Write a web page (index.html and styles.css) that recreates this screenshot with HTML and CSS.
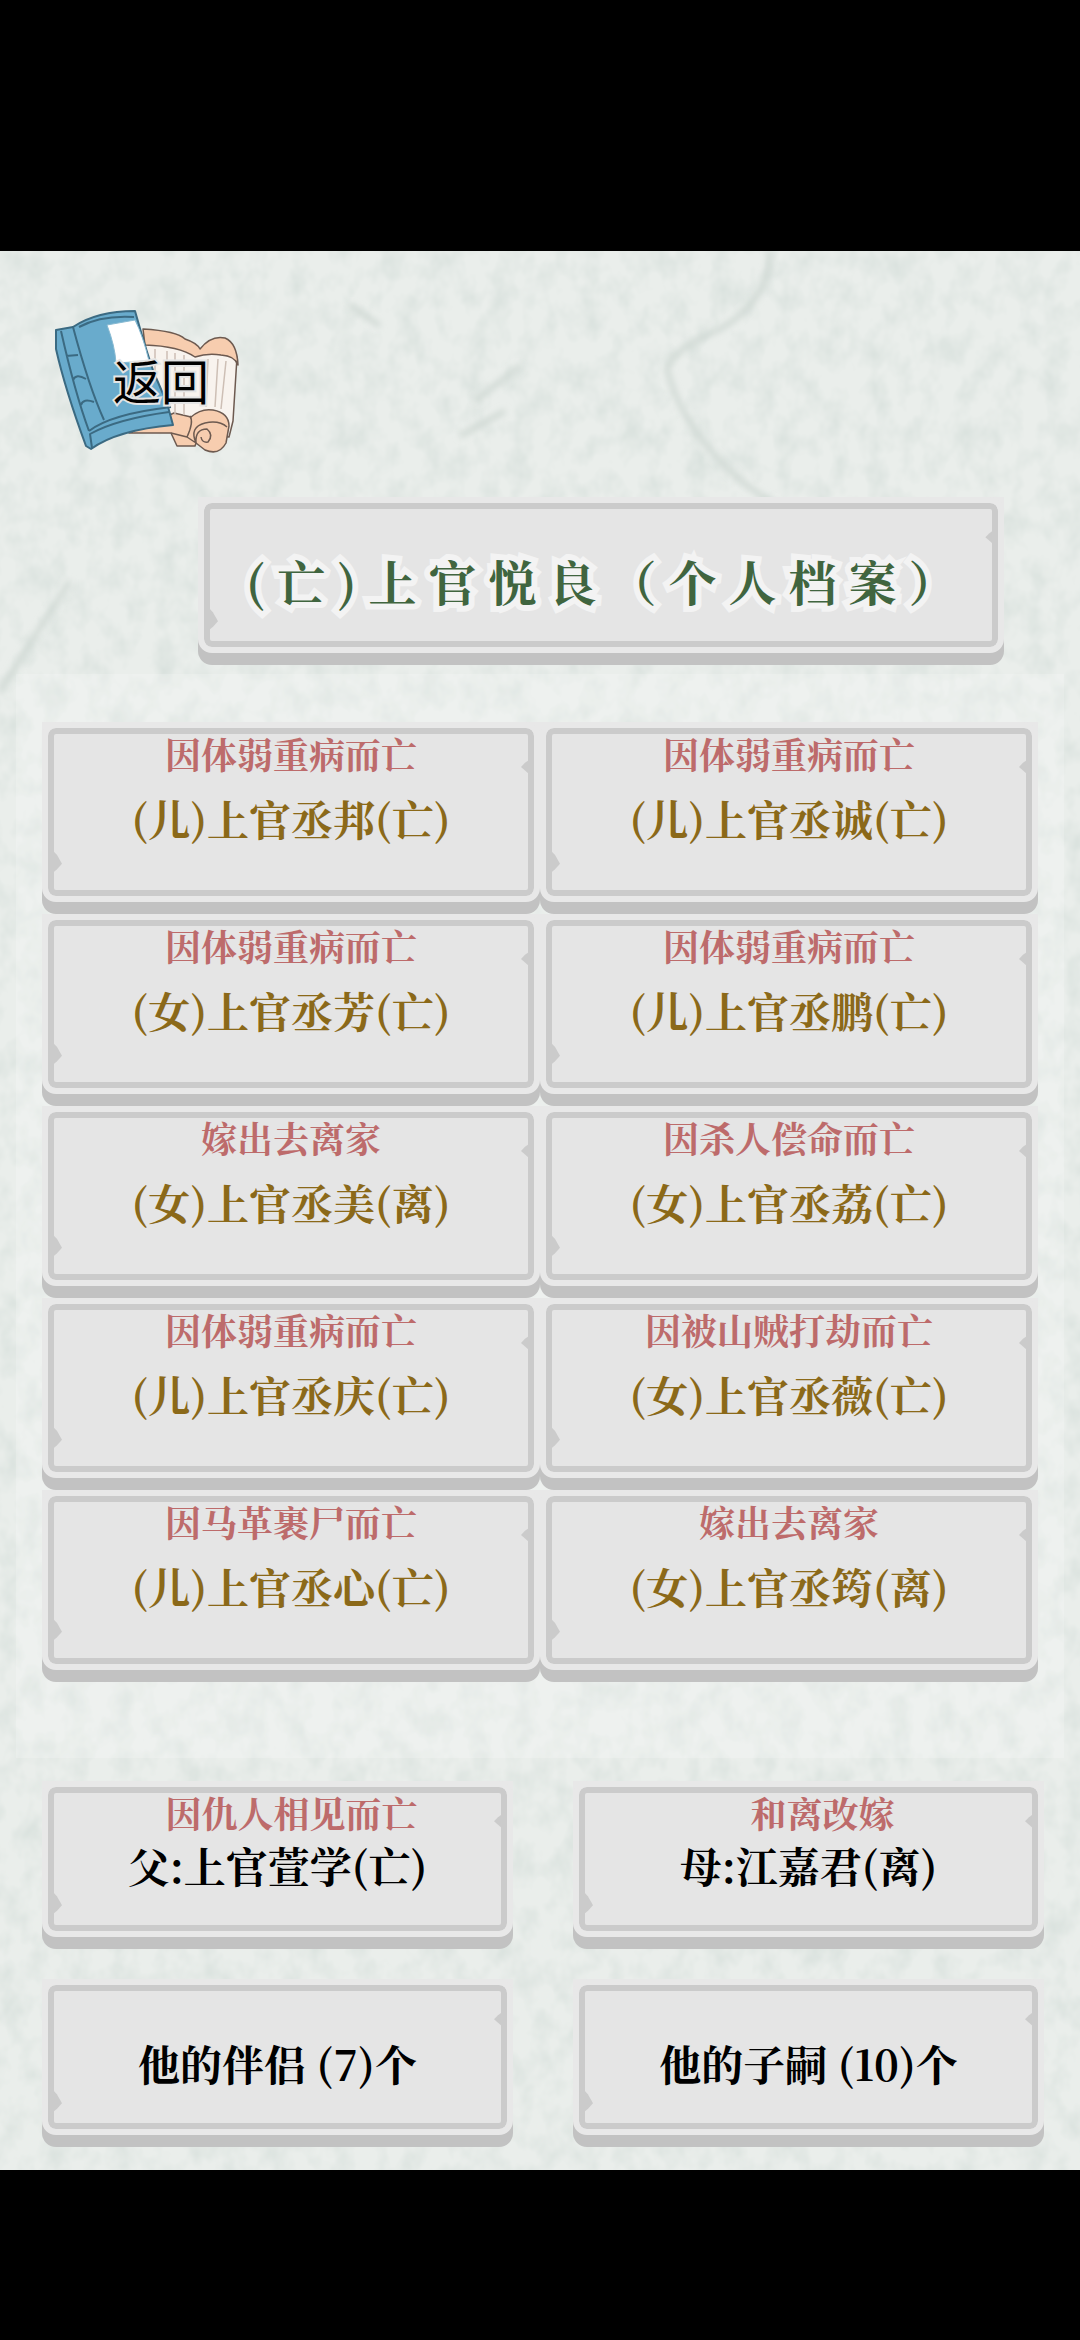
FILE: index.html
```html
<!DOCTYPE html>
<html lang="zh-CN">
<head>
  <meta charset="UTF-8">
  <meta name="viewport" content="width=device-width, initial-scale=1.0">
  <title>个人档案</title>
  <link rel="stylesheet" href="styles.css">
</head>
<body>
  <main class="paper">
    <!-- paper grain -->
    <svg class="grain" aria-hidden="true">
      <filter id="grain" x="0" y="0" width="100%" height="100%">
        <feTurbulence type="fractalNoise" baseFrequency="0.045 0.035" numOctaves="3" seed="8"/>
        <feColorMatrix values="0 0 0 0 0.7  0 0 0 0 0.76  0 0 0 0 0.73  1.8 0 0 0 -0.7"/>
      </filter>
      <filter id="soft">
        <feGaussianBlur stdDeviation="3"/>
      </filter>
      <rect width="100%" height="100%" filter="url(#grain)"/>
      <g fill="none" stroke="#cfd8d3" stroke-width="5" filter="url(#soft)">
        <path d="M770 0 Q770 50 720 78 Q670 100 667 118 Q680 170 725 215 Q750 240 790 262"/>
        <path d="M350 54 L380 75 M520 115 L475 150 M505 160 L460 185"/>
        <path d="M0 440 L70 330"/>
      </g>
    </svg>

    <button class="back" type="button">
      <svg class="back-icon" viewBox="0 0 190 150" aria-hidden="true">
        <g stroke="#6d5a50" stroke-width="1.5" stroke-linejoin="round">
          <path fill="#f8f3ee" d="M88 26 L124 32 Q138 38 144 40 L182 46 L178 110 L174 126 L92 118 Z"/>
          <path fill="#f7cdaf" d="M88 18 Q122 20 130 28 Q142 32 145 38 Q156 24 170 27 Q182 32 183 54 Q180 45 166 44 Q152 42 140 46 Q124 35 90 34 Z"/>
          <path fill="#f7cdaf" d="M74 122 L119 102 L136 106 Q146 97 158 99 Q174 102 174 115 L171 132 Q164 145 150 139 L141 132 L140 135 L122 135 L116 122 Z"/>
          <path fill="none" d="M135 105 Q139 111 132 126 M141 132 Q134 116 150 112 Q164 109 172 116 M141 132 Q140 118 152 118 Q159 124 153 131 Q147 132 146 126 M116 122 L132 126 L141 132"/>
          <path fill="none" stroke="#cdbfb5" d="M100 38 V112 M112 40 V106 M120 42 V104 M129 44 V104 M153 48 L151 96 M163 48 L160 96 M171 50 L166 98"/>
        </g>
        <g stroke="#3b6a82" stroke-width="2" stroke-linejoin="round">
          <path fill="#69abcc" d="M1 19 L18 16 Q42 0 80 0 L84 14 Q92 42 99 62 L112 92 L118 114 Q62 119 36 138 L31 135 Q10 78 1 38 Z"/>
          <path fill="none" d="M18 16 Q34 76 49 109 M6 20 Q20 82 34 120 M34 120 Q56 103 116 96 M37 137 L35 123 Q62 108 114 101 M11 45 L23 44 M18 69 Q21 62 31 68 M26 94 Q28 87 39 91"/>
          <path fill="none" d="M24 16 Q46 4 79 6"/>
        </g>
        <path fill="#fff" stroke="#88bad2" d="M52 14 L80 9 Q88 25 94 50 L61 52 Q60 35 52 14 Z"/>
      </svg>
      <span class="back-label">返回</span>
    </button>

    <div class="plaque title">
      <div class="face"><h1>(亡)上官悦良（个人档案）</h1></div>
    </div>

    <section class="list">
      <button class="plaque" type="button"><span class="face"><span class="note">因体弱重病而亡</span><span class="name">(儿)上官丞邦(亡)</span></span></button>
      <button class="plaque" type="button"><span class="face"><span class="note">因体弱重病而亡</span><span class="name">(儿)上官丞诚(亡)</span></span></button>
      <button class="plaque" type="button"><span class="face"><span class="note">因体弱重病而亡</span><span class="name">(女)上官丞芳(亡)</span></span></button>
      <button class="plaque" type="button"><span class="face"><span class="note">因体弱重病而亡</span><span class="name">(儿)上官丞鹏(亡)</span></span></button>
      <button class="plaque" type="button"><span class="face"><span class="note">嫁出去离家</span><span class="name">(女)上官丞美(离)</span></span></button>
      <button class="plaque" type="button"><span class="face"><span class="note">因杀人偿命而亡</span><span class="name">(女)上官丞荔(亡)</span></span></button>
      <button class="plaque" type="button"><span class="face"><span class="note">因体弱重病而亡</span><span class="name">(儿)上官丞庆(亡)</span></span></button>
      <button class="plaque" type="button"><span class="face"><span class="note">因被山贼打劫而亡</span><span class="name">(女)上官丞薇(亡)</span></span></button>
      <button class="plaque" type="button"><span class="face"><span class="note">因马革裹尸而亡</span><span class="name">(儿)上官丞心(亡)</span></span></button>
      <button class="plaque" type="button"><span class="face"><span class="note">嫁出去离家</span><span class="name">(女)上官丞筠(离)</span></span></button>
    </section>

    <section class="family">
      <button class="plaque parent" type="button"><span class="face"><span class="note">因仇人相见而亡</span><span class="name">父:上官萱学(亡)</span></span></button>
      <button class="plaque parent" type="button"><span class="face"><span class="note">和离改嫁</span><span class="name">母:江嘉君(离)</span></span></button>
      <button class="plaque count" type="button"><span class="face"><span class="name">他的伴侣 (7)个</span></span></button>
      <button class="plaque count" type="button"><span class="face"><span class="name">他的子嗣 (10)个</span></span></button>
    </section>
  </main>
</body>
</html>
```

FILE: styles.css
```css
* {
  box-sizing: border-box;
}

body {
  margin: 0;
  padding: 251px 0 170px;
  background-color: #000;
  font-family: "Noto Serif CJK SC", "Noto Sans CJK SC", serif;
  font-weight: 700;
}

.paper {
  position: relative;
  display: flex;
  flex-direction: column;
  padding: 60px 36px 23px;
  background-color: #eaeeeb;
}

/* texture lies under everything else */
.grain {
  position: absolute;
  inset: 0;
  width: 100%;
  height: 100%;
}

button {
  border: none;
  padding: 0;
  font: inherit;
  cursor: pointer;
}

/* back button */
.back {
  position: relative;
  align-self: flex-start;
  width: 190px;
  height: 150px;
  margin-left: 19px;
  background: none;
}

.back-icon {
  display: block;
  width: 100%;
  height: 100%;
  overflow: visible;
}

.back-label {
  position: absolute;
  left: 58px;
  top: 40px;
  font-family: "Noto Sans CJK SC", sans-serif;
  font-size: 48px;
  font-weight: 400;
  line-height: 56px;
  color: #000;
  -webkit-text-stroke: 4px #e4e4e4;
  paint-order: stroke fill;
}

/* stone plaque: light body on a grey base */
.plaque {
  position: relative;
  display: flex;
  min-height: 168px;
  padding-bottom: 12px;
  background: linear-gradient(#e8e8e8 70%, #c2c2c2 70%);
  border-radius: 0 0 14px 14px;
}

.face {
  position: relative;
  flex: 1;
  display: flex;
  flex-direction: column;
  align-items: center;
  border: 6px solid #e8e8e8;
  border-radius: 14px;
  background-color: #e5e5e5;
  box-shadow: inset 0 0 0 6px #cbcbcb;
}

/* chips in the ring */
.face::before,
.face::after {
  content: "";
  position: absolute;
  background-color: #cbcbcb;
}

.face::before {
  left: 5px;
  top: 73%;
  width: 9px;
  height: 22px;
  clip-path: polygon(0 0, 45% 20%, 100% 60%, 45% 85%, 0 100%);
}

.face::after {
  right: 5px;
  top: 19%;
  width: 8px;
  height: 14px;
  clip-path: polygon(100% 0, 50% 20%, 0 50%, 50% 75%, 100% 100%);
}

.note {
  font-size: 36px;
  line-height: 48px;
  color: #bd6b6b;
}

.name {
  font-size: 42px;
  line-height: 56px;
  color: #8b6919;
}

.title {
  width: 80%;
  margin: 36px 0 0 162px;
}

.title .face {
  justify-content: center;
  padding: 12px 0 0 12px;
}

h1 {
  margin: 0;
  font-size: 48px;
  font-weight: 700;
  line-height: 64px;
  letter-spacing: 12px;
  white-space: nowrap;
  color: #40653f;
  -webkit-text-stroke: 12px #f3f3f3;
  paint-order: stroke fill;
}

.list {
  position: relative;
  display: grid;
  grid-template-columns: 1fr 1fr;
  margin: 9px -20px 23px;
  padding: 48px 26px 76px;
  background-color: rgba(255, 255, 255, 0.2);
}

.list .plaque {
  min-height: 192px;
}

.list .face {
  padding-top: 2px;
  gap: 12px;
}

.family {
  display: grid;
  grid-template-columns: 1fr 1fr;
  gap: 30px 60px;
  padding-left: 6px;
}

.family .name {
  color: #000;
}

.parent .face {
  padding-top: 2px;
}

.parent .note {
  padding-left: 28px;
}

.count .face {
  justify-content: center;
  padding-top: 12px;
}
```
